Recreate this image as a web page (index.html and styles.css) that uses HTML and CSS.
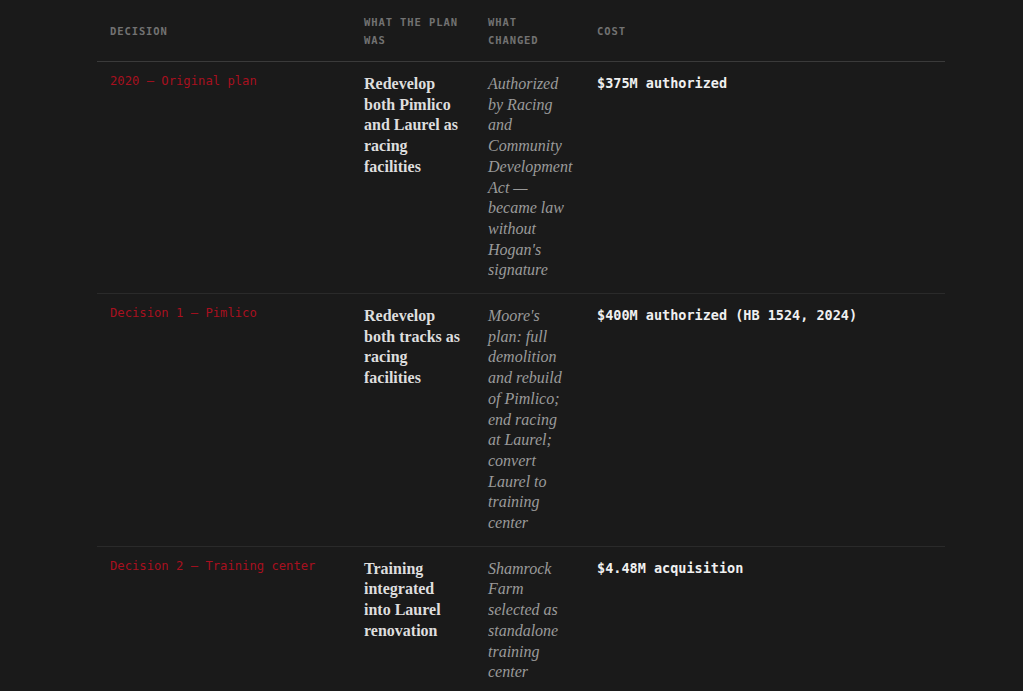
FILE: index.html
```html
<!DOCTYPE html>
<html lang="en">
<head>
<meta charset="utf-8">
<title>Decisions</title>
<link rel="stylesheet" href="styles.css">
</head>
<body>
<div class="wrap">
<table class="decisions">
  <colgroup>
    <col class="c-decision">
    <col class="c-plan">
    <col class="c-changed">
    <col class="c-cost">
  </colgroup>
  <thead>
    <tr>
      <th>Decision</th>
      <th>What the plan was</th>
      <th>What changed</th>
      <th>Cost</th>
    </tr>
  </thead>
  <tbody>
    <tr>
      <td class="decision">2020 — Original plan</td>
      <td class="plan">Redevelop both Pimlico and Laurel as racing facilities</td>
      <td class="changed">Authorized by Racing and Community Development Act — became law without Hogan's signature</td>
      <td class="cost">$375M authorized</td>
    </tr>
    <tr>
      <td class="decision">Decision 1 — Pimlico</td>
      <td class="plan">Redevelop both tracks as racing facilities</td>
      <td class="changed">Moore's plan: full demolition and rebuild of Pimlico; end racing at Laurel; convert Laurel to training center</td>
      <td class="cost">$400M authorized (HB 1524, 2024)</td>
    </tr>
    <tr>
      <td class="decision">Decision 2 — Training center</td>
      <td class="plan">Training integrated into Laurel renovation</td>
      <td class="changed">Shamrock Farm selected as standalone training center</td>
      <td class="cost">$4.48M acquisition</td>
    </tr>
  </tbody>
</table>
</div>
</body>
</html>
```

FILE: styles.css
```css
html, body {
  margin: 0;
  padding: 0;
  background: #1a1a1a;
}

.wrap {
  padding-left: 97px;
}

.decisions {
  width: 848px;
  border-collapse: collapse;
  table-layout: fixed;
}

.c-decision { width: 254px; }
.c-plan { width: 124px; }
.c-changed { width: 109px; }
.c-cost { width: 361px; }

.decisions th {
  font-family: "DejaVu Sans Mono", monospace;
  font-size: 10.5px;
  font-weight: 700;
  letter-spacing: 0.9px;
  line-height: 18px;
  text-transform: uppercase;
  color: #727272;
  text-align: left;
  vertical-align: middle;
  padding: 13px 13px 12px;
  border-bottom: 1px solid #3a3a3a;
}

.decisions td {
  vertical-align: top;
  padding: 12px 13px;
  border-bottom: 1px solid #2a2a2a;
}

.decision {
  font-family: "DejaVu Sans Mono", monospace;
  font-size: 12.2px;
  line-height: 1.2;
  color: #a8101f;
}

.plan {
  font-family: "Liberation Serif", serif;
  font-weight: 700;
  font-size: 16px;
  line-height: 20.7px;
  color: #dedede;
}

.changed {
  font-family: "Liberation Serif", serif;
  font-style: italic;
  font-size: 16px;
  line-height: 20.7px;
  color: #9a9a9a;
}

.cost {
  font-family: "DejaVu Sans Mono", monospace;
  font-weight: 700;
  font-size: 13.5px;
  line-height: 19px;
  color: #f0f0f0;
}
```
